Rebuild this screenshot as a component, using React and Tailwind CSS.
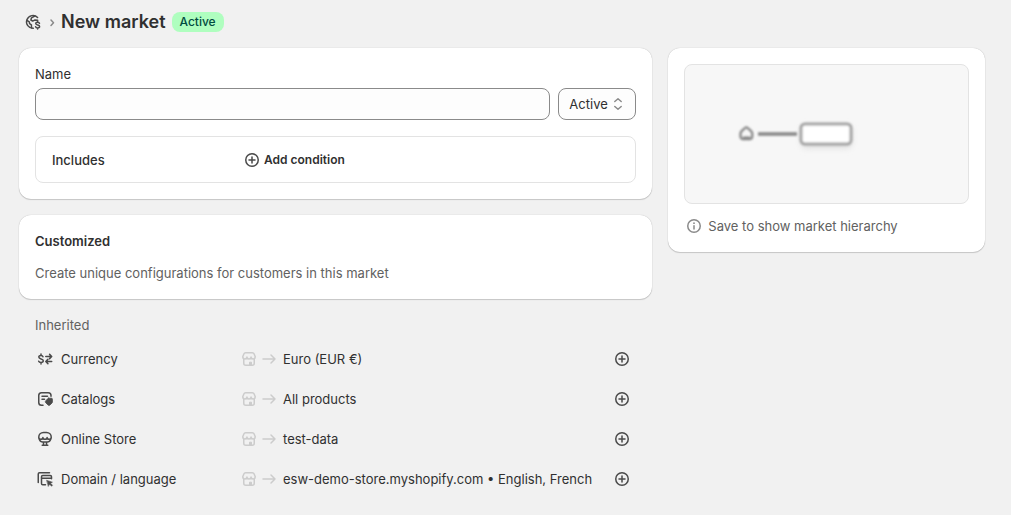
import React from "react";

function Icon({ children, className = "text-[#4a4a4a]" }) {
  return (
    <svg
      viewBox="0 0 20 20"
      aria-hidden="true"
      className={"size-5 shrink-0 " + className}
      fill="none"
      stroke="currentColor"
      strokeWidth="1.5"
      strokeLinecap="round"
      strokeLinejoin="round"
    >
      {children}
    </svg>
  );
}

function MarketsIcon() {
  return (
    <Icon>
      <path d="M14.6 5.500A6.400 6.400 0 1 0 10.300 16.300" />
      <path d="M4 8.300l2.300 1.500.3 1.800 1.800 1.200.1 3.200M11.800 4l-3.300 1.800-.6 2.200 1.800 1.100 2.300-1.200 2.600.4" />
      <path d="M16.500 11.300c-.3-.8-1-1.100-1.900-1.100-1.100 0-1.900.5-1.900 1.400 0 2 3.900.9 3.900 2.900 0 .9-.8 1.400-2 1.400-1 0-1.700-.4-2-1.100M14.600 9v1M14.600 16v1" />
    </Icon>
  );
}

function CurrencyIcon() {
  return (
    <Icon>
      <path d="M8 7.700C7.700 6.900 7 6.500 6 6.500c-1.300 0-2.200.6-2.200 1.600 0 2.500 4.500 1.200 4.500 3.700 0 1.100-.9 1.700-2.300 1.700-1.200 0-2-.4-2.300-1.300M6 5v1.200M6 13.800V15" />
      <path d="M10.800 7.500h5.700M14.600 5.400l2.100 2.100-2.100 2.100M16.700 12.500H11M12.900 10.400l-2.100 2.100 2.100 2.100" />
    </Icon>
  );
}

function CatalogIcon() {
  return (
    <Icon>
      <path d="M8 16.250H6.500a2.750 2.750 0 0 1-2.750-2.750v-7A2.750 2.750 0 0 1 6.500 3.750h6.750A2.750 2.750 0 0 1 16 6.500v.8" />
      <path d="M7 7.200h5.500M7 10.200h2.500" />
      <path
        d="M13.600 9.200h2.800c.6 0 1 .4 1 1V13c0 .4-.1.700-.4 1l-2.100 2.100c-.5.500-1.300.5-1.800 0l-2.400-2.400c-.5-.5-.5-1.300 0-1.800l2.100-2.300c.2-.3.500-.4.800-.4z"
        fill="currentColor"
        strokeWidth="0.8"
      />
    </Icon>
  );
}

function OnlineStoreIcon() {
  return (
    <Icon>
      <path d="M3.750 8.300c0-2.800 2.100-4.800 4.750-4.800h3c2.650 0 4.750 2 4.750 4.800 0 1.200-.9 2-2.050 2s-2.100-.9-2.100-1.900c0 1-.9 1.900-2.100 1.900s-2.100-.9-2.100-1.900c0 1-.95 1.900-2.100 1.900s-2.050-.8-2.050-2z" />
      <path d="M4.300 10.300c.6 1.700 1.800 2.700 3.400 2.700h4.600c1.600 0 2.800-1 3.400-2.700M8.500 13.200v2.800M11.500 13.200v2.800M7.200 16.300h5.600" />
    </Icon>
  );
}

function DomainIcon() {
  return (
    <Icon>
      <path d="M3.250 13.500V5c0-.7.500-1.250 1.250-1.250h10" />
      <path d="M10.500 15.750H7.750c-.7 0-1.250-.5-1.250-1.250V7.750c0-.7.500-1.250 1.250-1.250h7.500c.7 0 1.250.5 1.250 1.250v2M6.500 9.300h10" />
      <path
        d="M11.900 11.400l5.500 1.800-1.900 1.100 2 2-.9.900-2-2-1.100 1.900z"
        fill="currentColor"
        strokeWidth="0.6"
      />
    </Icon>
  );
}

function StoreIcon() {
  return (
    <Icon className="text-[#cccccc]">
      <path d="M3.750 7.800l1.100-2.800c.3-.8 1-1.250 1.850-1.250h6.600c.85 0 1.550.45 1.850 1.250l1.100 2.800c0 1.300-.9 2.200-2.100 2.200s-2.100-.9-2.100-1.900c0 1-.9 1.900-2.050 1.900s-2.050-.9-2.050-1.900c0 1-.9 1.900-2.100 1.900s-2.100-.9-2.100-2.200z" />
      <path d="M4.750 10.300v3.950c0 1.100.9 2 2 2h6.500c1.100 0 2-.9 2-2V10.300" />
      <path d="M10.500 16v-2.800h2V16z" fill="currentColor" strokeWidth="1" />
    </Icon>
  );
}

function ArrowIcon() {
  return (
    <Icon className="text-[#cccccc]">
      <path d="M4 10h12M12 6l4 4-4 4" />
    </Icon>
  );
}

function PlusIcon() {
  return (
    <Icon>
      <circle cx="10" cy="10" r="6.250" />
      <path d="M10 7v6M7 10h6" />
    </Icon>
  );
}

function InfoIcon() {
  return (
    <Icon className="text-[#8a8a8a]">
      <circle cx="10" cy="10" r="6.250" />
      <path d="M10 9.700V13" />
      <circle cx="10" cy="7.200" r="0.900" fill="currentColor" stroke="none" />
    </Icon>
  );
}

function Card({ children }) {
  return (
    <section className="rounded-xl bg-white p-4 shadow-[0_1px_1px_rgba(0,0,0,0.16),0_0_1px_rgba(0,0,0,0.28)]">
      {children}
    </section>
  );
}

function HierarchyPreview() {
  return (
    <div className="flex h-35 items-center justify-center rounded-lg border border-[#e3e3e3] bg-[#f7f7f7]">
      <svg viewBox="0 0 180 60" className="h-[60px] w-[180px]" aria-hidden="true">
        <defs>
          <filter id="blur" filterUnits="userSpaceOnUse" x="0" y="0" width="180" height="60">
            <feGaussianBlur stdDeviation="1.3" />
          </filter>
          <filter id="shade" filterUnits="userSpaceOnUse" x="0" y="0" width="180" height="60">
            <feGaussianBlur stdDeviation="3" />
          </filter>
        </defs>
        <rect x="64" y="22" width="51" height="22" rx="5" fill="#dddddd" filter="url(#shade)" />
        <g filter="url(#blur)">
          <path
            d="M3.500 32v-2.500c0-1 .4-1.700 1.100-2.300L8 24c.8-.7 1.900-.7 2.700 0l3.400 3.200c.7.600 1.100 1.300 1.100 2.300V32c0 2-1 3.200-2.700 3.200H6.200c-1.700 0-2.700-1.200-2.700-3.200z"
            fill="none"
            stroke="#858585"
            strokeWidth="2.3"
          />
          <path d="M6 35v-2.500h7V35z" fill="#858585" />
          <path d="M21 30h39" stroke="#858585" strokeWidth="3.5" />
          <rect x="64" y="20" width="50" height="20" rx="4" fill="#ffffff" stroke="#a3a3a3" strokeWidth="3" />
        </g>
      </svg>
    </div>
  );
}

const settings = [
  { label: "Currency", value: "Euro (EUR €)", Glyph: CurrencyIcon },
  { label: "Catalogs", value: "All products", Glyph: CatalogIcon },
  { label: "Online Store", value: "test-data", Glyph: OnlineStoreIcon },
  {
    label: "Domain / language",
    value: "esw-demo-store.myshopify.com • English, French",
    Glyph: DomainIcon,
  },
];

export default function App() {
  return (
    <div className="min-h-screen bg-[#f1f1f1] pr-[26px] pl-[19px] font-['Inter',sans-serif] text-[13px] leading-5 text-[#303030]">
      <header className="flex h-12 items-center pb-1 pl-1">
        <a href="#markets" aria-label="Markets">
          <MarketsIcon />
        </a>
        <svg
          viewBox="0 0 16 20"
          className="h-5 w-4"
          fill="none"
          stroke="#8a8a8a"
          strokeWidth="1.5"
          strokeLinecap="round"
          strokeLinejoin="round"
          aria-hidden="true"
        >
          <path d="M8 8l2.500 2.700L8 13.400" />
        </svg>
        <h1 className="ml-0.5 text-lg leading-6 font-semibold">New market</h1>
        <span className="ml-1.5 rounded-lg bg-[#affebf] px-2 text-xs leading-5 font-medium text-[#014b40]">
          Active
        </span>
      </header>
      <main className="grid grid-cols-[2fr_1fr] items-start gap-4">
        <div className="flex min-w-0 flex-col gap-4">
          <Card>
            <label htmlFor="market-name" className="mb-1 block">
              Name
            </label>
            <div className="flex gap-2">
              <input
                id="market-name"
                type="text"
                className="h-8 min-w-0 flex-1 rounded-lg border border-[#8a8a8a] bg-[#fdfdfd] px-3"
              />
              <div className="grid w-[78px] items-center">
                <select
                  aria-label="Status"
                  defaultValue="Active"
                  className="col-start-1 row-start-1 h-8 appearance-none rounded-lg border border-[#8a8a8a] bg-[#fdfdfd] pl-2.5"
                >
                  <option>Active</option>
                  <option>Draft</option>
                </select>
                <span className="pointer-events-none col-start-1 row-start-1 mr-2 justify-self-end">
                  <Icon className="text-[#8a8a8a]">
                    <path d="M6.800 7.500L10 4.800l3.200 2.700M6.800 12.500l3.200 2.700 3.200-2.700" />
                  </Icon>
                </span>
              </div>
            </div>
            <div className="mt-4 flex min-h-[47px] items-center rounded-lg border border-[#e3e3e3] px-4">
              <h2 className="w-[190px] font-medium">Includes</h2>
              <button type="button" className="flex items-center gap-0.5 text-xs leading-5 font-semibold">
                <PlusIcon />
                Add condition
              </button>
            </div>
          </Card>
          <Card>
            <h2 className="mb-3 font-semibold">Customized</h2>
            <p className="text-[#616161]">Create unique configurations for customers in this market</p>
          </Card>
          <section className="px-4">
            <h2 className="mb-1 text-[#616161]">Inherited</h2>
            <ul>
              {settings.map(({ label, value, Glyph }) => (
                <li key={label} className="flex h-10 items-center pr-1">
                  <div className="flex w-[204px] shrink-0 items-center gap-1.5">
                    <Glyph />
                    {label}
                  </div>
                  <StoreIcon />
                  <ArrowIcon />
                  <span className="ml-1 flex-1 whitespace-nowrap">{value}</span>
                  <button type="button" aria-label={"Customize " + label}>
                    <PlusIcon />
                  </button>
                </li>
              ))}
            </ul>
          </section>
        </div>
        <Card>
          <HierarchyPreview />
          <p className="mt-3 flex items-center gap-1 text-[#616161]">
            <InfoIcon />
            Save to show market hierarchy
          </p>
        </Card>
      </main>
    </div>
  );
}
